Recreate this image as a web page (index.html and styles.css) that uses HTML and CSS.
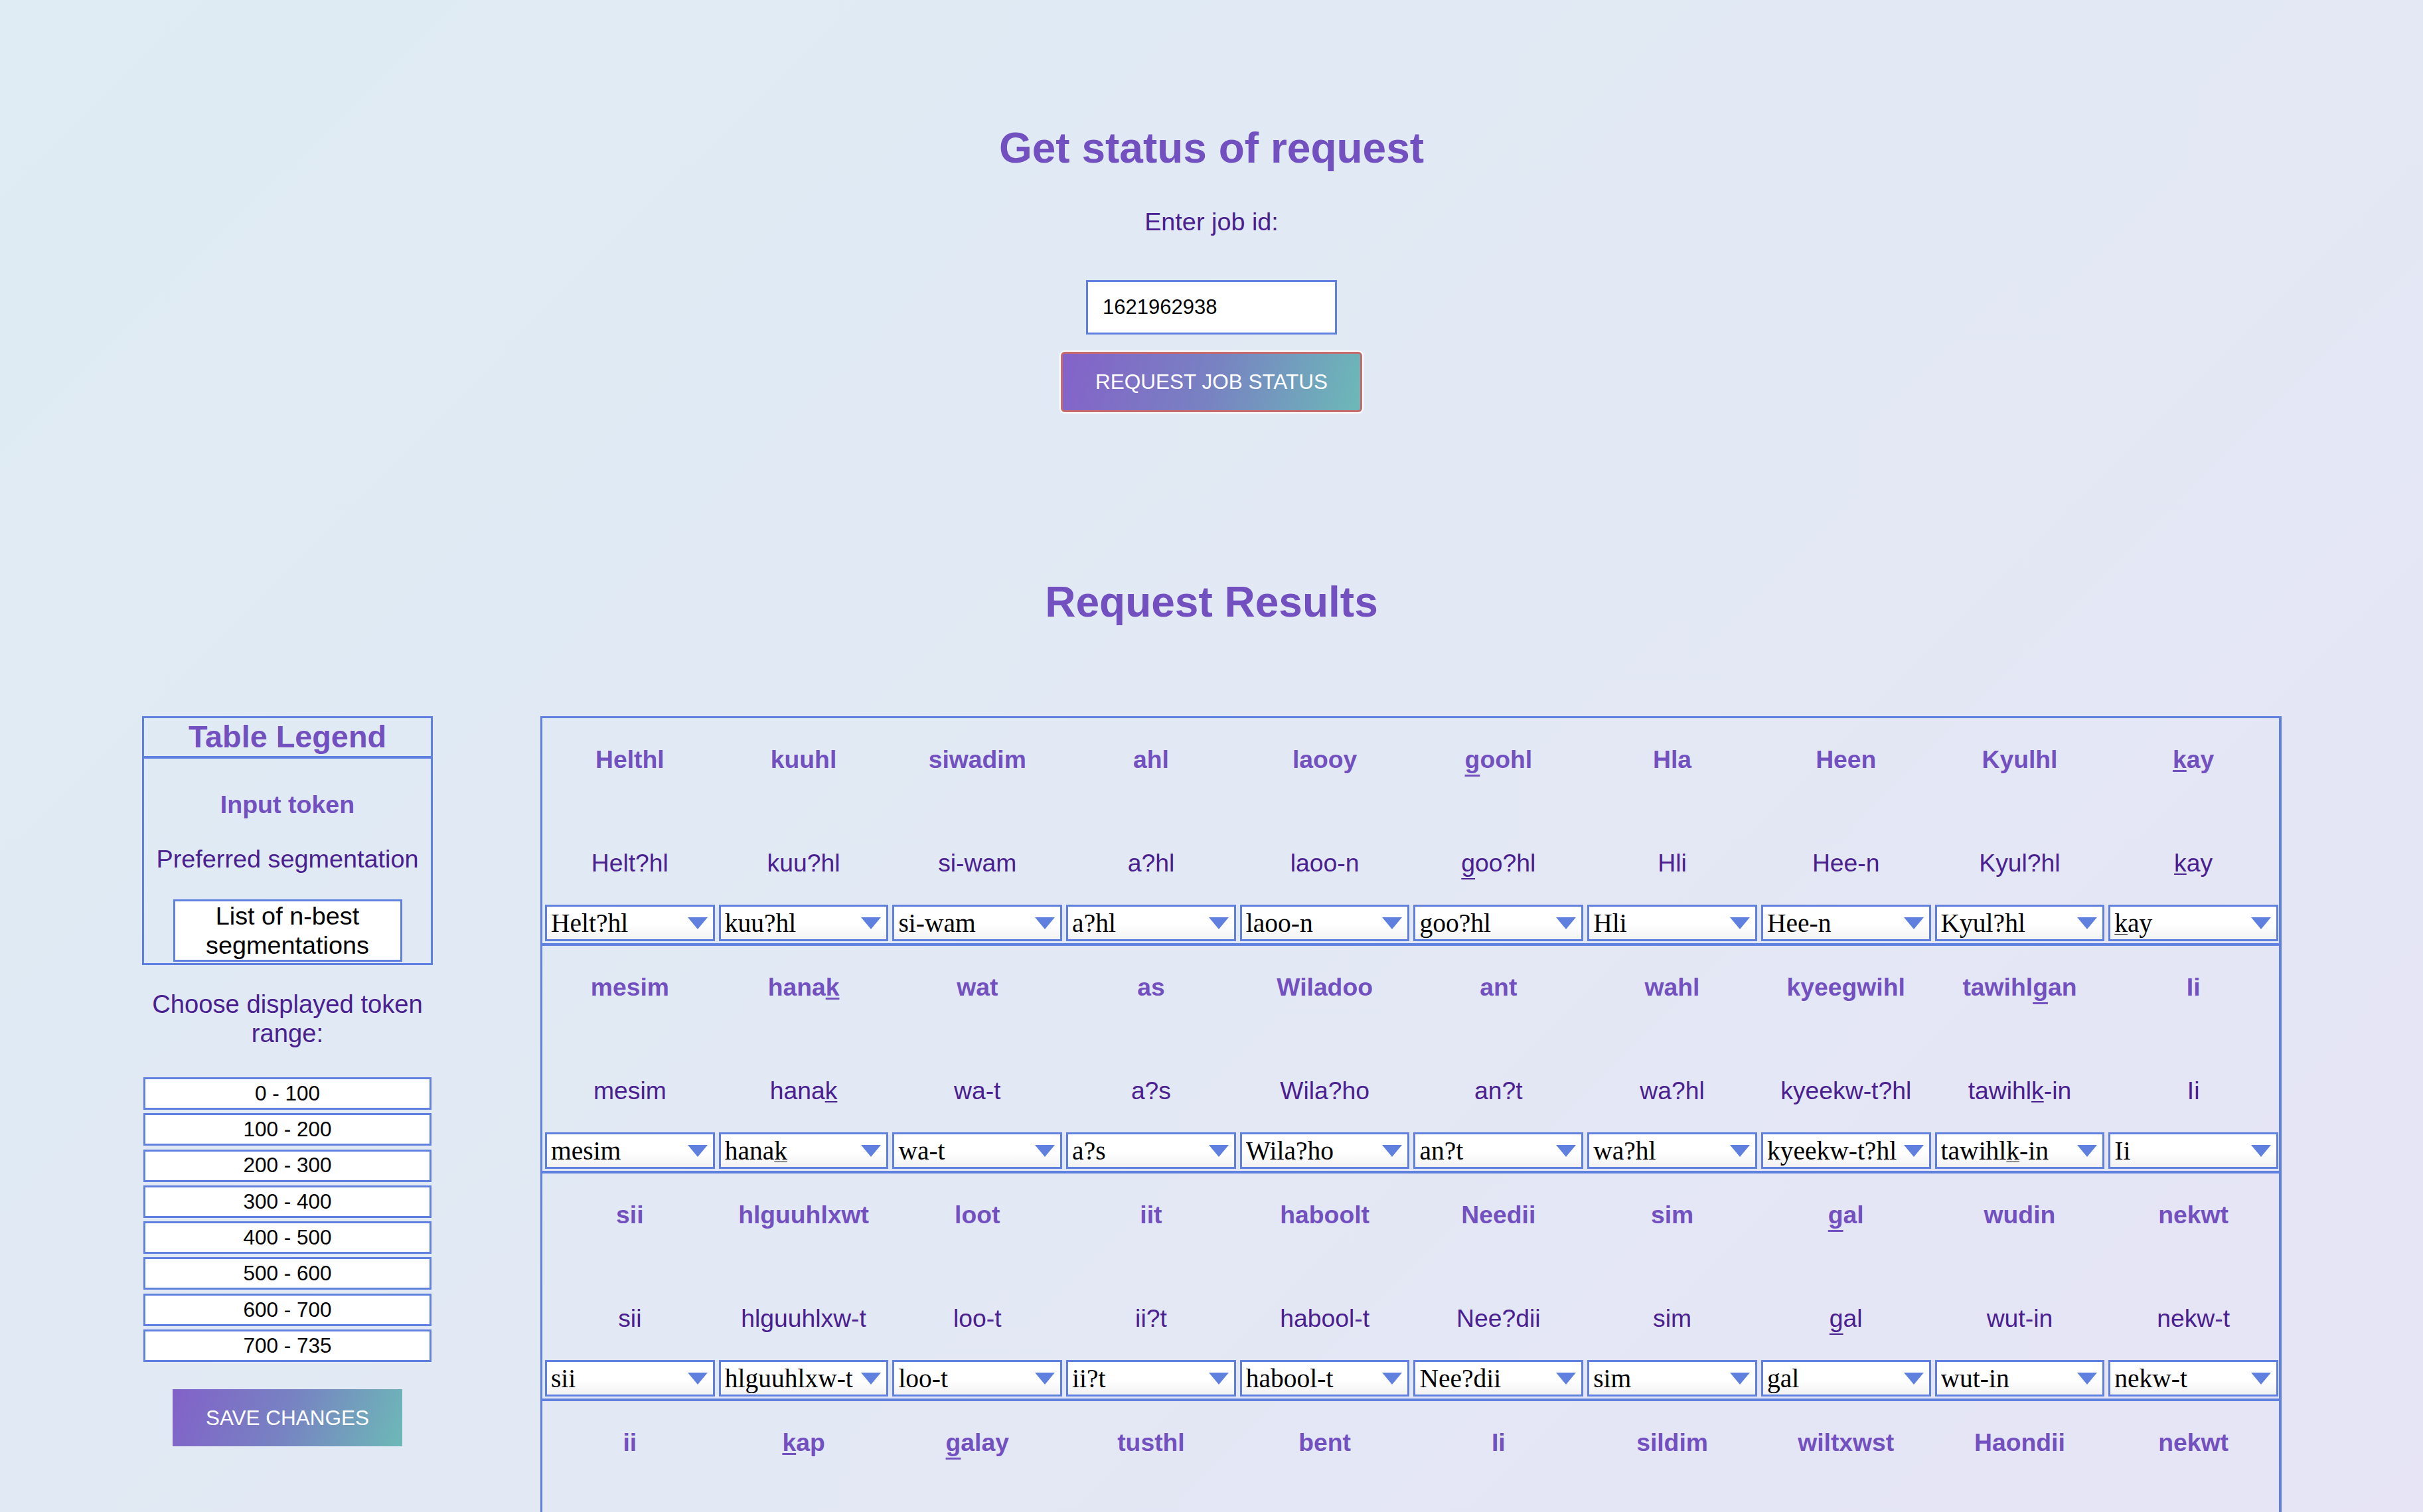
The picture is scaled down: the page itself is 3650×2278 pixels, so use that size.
FILE: index.html
```html
<!DOCTYPE html>
<html lang="en">
<head>
<meta charset="utf-8">
<title>Get status of request</title>
<link rel="stylesheet" href="styles.css">
</head>
<body>
<main class="page">
  <section class="status">
    <h1 class="title">Get status of request</h1>
    <p class="label">Enter job id:</p>
    <input class="job-input" type="text" value="1621962938">
    <button class="btn-request" type="button">REQUEST JOB STATUS</button>
  </section>

  <h1 class="title results-title">Request Results</h1>

  <section class="results">
    <aside class="sidebar">
      <div class="legend">
        <div class="legend-head">Table Legend</div>
        <div class="legend-body">
          <div class="legend-token">Input token</div>
          <div class="legend-seg">Preferred segmentation</div>
          <div class="legend-list">List of n-best segmentations</div>
        </div>
      </div>
      <p class="range-label">Choose displayed token range:</p>
      <div class="ranges">
        <button class="range" type="button">0 - 100</button>
        <button class="range" type="button">100 - 200</button>
        <button class="range" type="button">200 - 300</button>
        <button class="range" type="button">300 - 400</button>
        <button class="range" type="button">400 - 500</button>
        <button class="range" type="button">500 - 600</button>
        <button class="range" type="button">600 - 700</button>
        <button class="range" type="button">700 - 735</button>
      </div>
      <button class="btn-save" type="button">SAVE CHANGES</button>
    </aside>

    <div class="table">
      <div class="row">
        <div class="cell"><div class="tok">Helthl</div><div class="seg">Helt?hl</div><div class="sel"><span>Helt?hl</span></div></div>
        <div class="cell"><div class="tok">kuuhl</div><div class="seg">kuu?hl</div><div class="sel"><span>kuu?hl</span></div></div>
        <div class="cell"><div class="tok">siwadim</div><div class="seg">si-wam</div><div class="sel"><span>si-wam</span></div></div>
        <div class="cell"><div class="tok">ahl</div><div class="seg">a?hl</div><div class="sel"><span>a?hl</span></div></div>
        <div class="cell"><div class="tok">laooy</div><div class="seg">laoo-n</div><div class="sel"><span>laoo-n</span></div></div>
        <div class="cell"><div class="tok"><u class="ug">g</u>oohl</div><div class="seg"><u class="ug">g</u>oo?hl</div><div class="sel"><span><u class="ug">g</u>oo?hl</span></div></div>
        <div class="cell"><div class="tok">Hla</div><div class="seg">Hli</div><div class="sel"><span>Hli</span></div></div>
        <div class="cell"><div class="tok">Heen</div><div class="seg">Hee-n</div><div class="sel"><span>Hee-n</span></div></div>
        <div class="cell"><div class="tok">Kyulhl</div><div class="seg">Kyul?hl</div><div class="sel"><span>Kyul?hl</span></div></div>
        <div class="cell"><div class="tok"><u>k</u>ay</div><div class="seg"><u>k</u>ay</div><div class="sel"><span><u>k</u>ay</span></div></div>
      </div>
      <div class="row">
        <div class="cell"><div class="tok">mesim</div><div class="seg">mesim</div><div class="sel"><span>mesim</span></div></div>
        <div class="cell"><div class="tok">hana<u>k</u></div><div class="seg">hana<u>k</u></div><div class="sel"><span>hana<u>k</u></span></div></div>
        <div class="cell"><div class="tok">wat</div><div class="seg">wa-t</div><div class="sel"><span>wa-t</span></div></div>
        <div class="cell"><div class="tok">as</div><div class="seg">a?s</div><div class="sel"><span>a?s</span></div></div>
        <div class="cell"><div class="tok">Wiladoo</div><div class="seg">Wila?ho</div><div class="sel"><span>Wila?ho</span></div></div>
        <div class="cell"><div class="tok">ant</div><div class="seg">an?t</div><div class="sel"><span>an?t</span></div></div>
        <div class="cell"><div class="tok">wahl</div><div class="seg">wa?hl</div><div class="sel"><span>wa?hl</span></div></div>
        <div class="cell"><div class="tok">kyeegwihl</div><div class="seg">kyeekw-t?hl</div><div class="sel"><span>kyeekw-t?hl</span></div></div>
        <div class="cell"><div class="tok">tawihl<u class="ug">g</u>an</div><div class="seg">tawihl<u>k</u>-in</div><div class="sel"><span>tawihl<u>k</u>-in</span></div></div>
        <div class="cell"><div class="tok">Ii</div><div class="seg">Ii</div><div class="sel"><span>Ii</span></div></div>
      </div>
      <div class="row">
        <div class="cell"><div class="tok">sii</div><div class="seg">sii</div><div class="sel"><span>sii</span></div></div>
        <div class="cell"><div class="tok">hlguuhlxwt</div><div class="seg">hlguuhlxw-t</div><div class="sel"><span>hlguuhlxw-t</span></div></div>
        <div class="cell"><div class="tok">loot</div><div class="seg">loo-t</div><div class="sel"><span>loo-t</span></div></div>
        <div class="cell"><div class="tok">iit</div><div class="seg">ii?t</div><div class="sel"><span>ii?t</span></div></div>
        <div class="cell"><div class="tok">haboolt</div><div class="seg">habool-t</div><div class="sel"><span>habool-t</span></div></div>
        <div class="cell"><div class="tok">Needii</div><div class="seg">Nee?dii</div><div class="sel"><span>Nee?dii</span></div></div>
        <div class="cell"><div class="tok">sim</div><div class="seg">sim</div><div class="sel"><span>sim</span></div></div>
        <div class="cell"><div class="tok"><u class="ug">g</u>al</div><div class="seg"><u class="ug">g</u>al</div><div class="sel"><span><u class="ug">g</u>al</span></div></div>
        <div class="cell"><div class="tok">wudin</div><div class="seg">wut-in</div><div class="sel"><span>wut-in</span></div></div>
        <div class="cell"><div class="tok">nekwt</div><div class="seg">nekw-t</div><div class="sel"><span>nekw-t</span></div></div>
      </div>
      <div class="row">
        <div class="cell"><div class="tok">ii</div><div class="seg">ii</div><div class="sel"><span>ii</span></div></div>
        <div class="cell"><div class="tok"><u>k</u>ap</div><div class="seg"><u>k</u>ap</div><div class="sel"><span><u>k</u>ap</span></div></div>
        <div class="cell"><div class="tok"><u class="ug">g</u>alay</div><div class="seg"><u class="ug">g</u>alay</div><div class="sel"><span><u class="ug">g</u>alay</span></div></div>
        <div class="cell"><div class="tok">tusthl</div><div class="seg">tust?hl</div><div class="sel"><span>tust?hl</span></div></div>
        <div class="cell"><div class="tok">bent</div><div class="seg">ben-t</div><div class="sel"><span>ben-t</span></div></div>
        <div class="cell"><div class="tok">Ii</div><div class="seg">Ii</div><div class="sel"><span>Ii</span></div></div>
        <div class="cell"><div class="tok">sildim</div><div class="seg">sil-dim</div><div class="sel"><span>sil-dim</span></div></div>
        <div class="cell"><div class="tok">wiltxwst</div><div class="seg">wiltxw-st</div><div class="sel"><span>wiltxw-st</span></div></div>
        <div class="cell"><div class="tok">Haondii</div><div class="seg">Haon-dii</div><div class="sel"><span>Haon-dii</span></div></div>
        <div class="cell"><div class="tok">nekwt</div><div class="seg">nekw-t</div><div class="sel"><span>nekw-t</span></div></div>
      </div>
    </div>
  </section>
</main>
</body>
</html>
```

FILE: styles.css
```css
html {
  min-height: 100%;
  background: linear-gradient(135deg, #dfecf4 0%, #e2e9f4 50%, #e6e4f5 100%) fixed;
}

body {
  margin: 0;
  font-family: "Liberation Sans", Arial, Helvetica, sans-serif;
  color: #4a2090;
}

.page {
  padding-bottom: 200px;
}

/* ---------- status section ---------- */
.status {
  padding-top: 186px;
  text-align: center;
}

.title {
  margin: 0;
  font-size: 64px;
  line-height: 74px;
  font-weight: bold;
  color: #7350c0;
  text-align: center;
}

.label {
  margin: 53px 0 0;
  font-size: 37.8px;
  line-height: 42px;
  color: #4a2090;
}

.job-input {
  display: block;
  box-sizing: border-box;
  margin: 67px auto 0;
  width: 378px;
  height: 82px;
  padding: 0 0 0 22px;
  border: 3px solid #6080e0;
  background: #fff;
  font-family: "Liberation Sans", Arial, sans-serif;
  font-size: 31px;
  color: #000;
  outline: none;
}

.btn-request {
  display: block;
  box-sizing: border-box;
  margin: 26px auto 0;
  width: 454px;
  height: 91px;
  border: 3px solid #c76a6c;
  border-radius: 6px;
  box-shadow: 0 0 0 2px #ffffff;
  background: linear-gradient(105deg, #8462c9 0%, #7882c2 50%, #6cb9b8 100%);
  color: #fff;
  font-family: "Liberation Sans", Arial, sans-serif;
  font-size: 31.5px;
  padding: 0;
}

.results-title {
  margin-top: 249px;
}

/* ---------- results ---------- */
.results {
  display: flex;
  align-items: flex-start;
  gap: 162px;
  margin-top: 135px;
  padding: 0 213px 0 214px;
}

.sidebar {
  flex: 0 0 438px;
  width: 438px;
  display: flex;
  flex-direction: column;
  align-items: center;
}

.legend {
  box-sizing: border-box;
  width: 438px;
  border: 3px solid #6080e0;
  text-align: center;
}

.legend-head {
  height: 57px;
  line-height: 57px;
  font-size: 46.8px;
  font-weight: bold;
  color: #7350c0;
  border-bottom: 4px solid #6080e0;
}

.legend-body {
  display: flex;
  flex-direction: column;
  align-items: center;
  padding: 48px 0 2px;
}

.legend-token {
  font-size: 37.6px;
  line-height: 42px;
  font-weight: bold;
  color: #7350c0;
}

.legend-seg {
  margin-top: 40px;
  font-size: 37.8px;
  line-height: 42px;
  color: #4a2090;
}

.legend-list {
  box-sizing: border-box;
  margin-top: 40px;
  width: 345px;
  border: 3px solid #6080e0;
  background: #fff;
  color: #000;
  font-size: 37.8px;
  line-height: 44px;
}

.range-label {
  margin: 37px 0 0;
  font-size: 38.2px;
  line-height: 44px;
  text-align: center;
  color: #4a2090;
}

.ranges {
  margin-top: 44px;
  width: 434px;
  display: flex;
  flex-direction: column;
  gap: 5.3px;
}

.range {
  box-sizing: border-box;
  height: 49px;
  width: 100%;
  margin: 0;
  padding: 0;
  border: 3px solid #6080e0;
  background: #fff;
  color: #000;
  font-family: "Liberation Sans", Arial, sans-serif;
  font-size: 31.5px;
  line-height: 1;
}

.btn-save {
  margin-top: 41px;
  width: 346px;
  height: 86px;
  border: none;
  padding: 0;
  background: linear-gradient(110deg, #8261c9 0%, #7783c2 50%, #6db9b7 100%);
  color: #fff;
  font-family: "Liberation Sans", Arial, sans-serif;
  font-size: 31.5px;
}

/* ---------- table ---------- */
.table {
  flex: 0 0 2623px;
  box-sizing: border-box;
  width: 2623px;
  border: 3px solid #6080e0;
  border-right-width: 4px;
}

.row {
  display: grid;
  grid-template-columns: repeat(10, 1fr);
  column-gap: 6px;
  padding: 0 1px 3px 4px;
  border-bottom: 4px solid #6080e0;
}

.cell {
  min-width: 0;
  display: flex;
  flex-direction: column;
  align-items: stretch;
  text-align: center;
  padding-top: 41px;
}

.tok {
  font-size: 37.3px;
  line-height: 42px;
  font-weight: bold;
  color: #7350c0;
  white-space: nowrap;
}

.seg {
  margin-top: 114px;
  font-size: 37.3px;
  line-height: 42px;
  color: #4a2090;
  white-space: nowrap;
}

u {
  text-decoration-line: underline;
  text-decoration-thickness: from-font;
  text-decoration-skip-ink: none;
  text-underline-offset: 3px;
}

u.ug {
  text-underline-offset: 10px;
}

.sel {
  box-sizing: border-box;
  margin-top: 42px;
  height: 55px;
  display: flex;
  align-items: center;
  padding: 0 8px 0 6px;
  border: 3px solid #6080e0;
  background: linear-gradient(#ffffff 55%, #f2f2f2 100%);
  color: #000;
  font-family: "Liberation Serif", "Times New Roman", serif;
  font-size: 39.5px;
  text-align: left;
  overflow: hidden;
}

.sel span {
  flex: 1 1 auto;
  min-width: 0;
  white-space: nowrap;
  overflow: hidden;
}

.sel::after {
  content: "";
  flex: 0 0 auto;
  width: 0;
  height: 0;
  border-left: 15.5px solid transparent;
  border-right: 15.5px solid transparent;
  border-top: 18px solid #6080e0;
}
```
